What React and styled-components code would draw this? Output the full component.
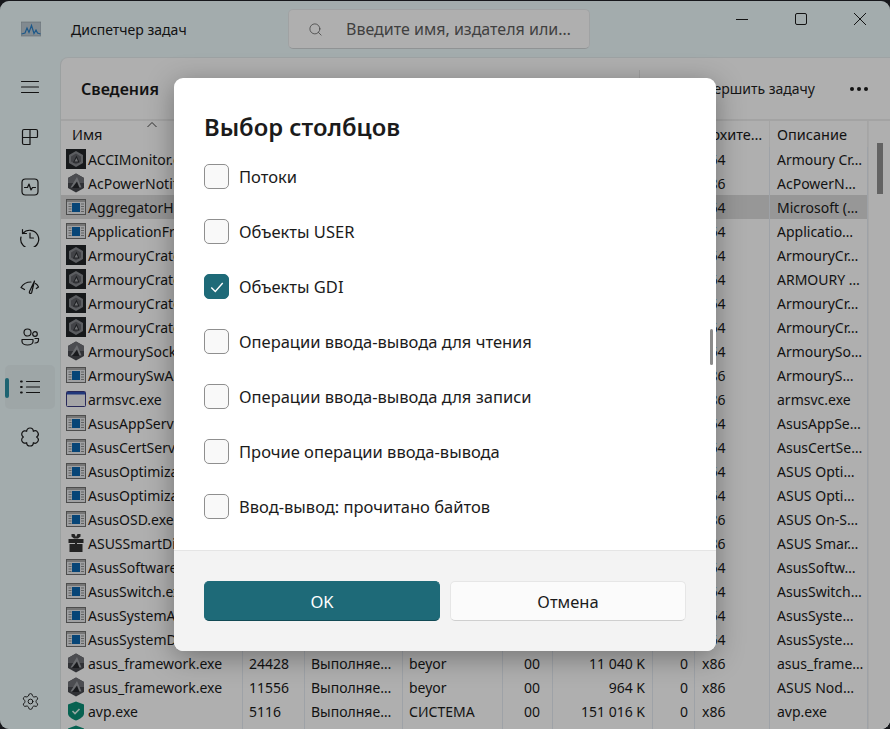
import React from 'react'
import styled, { createGlobalStyle } from 'styled-components'
import { Search, Settings } from 'lucide-react'

const GlobalStyle = createGlobalStyle`
  html, body {
    margin: 0;
    height: 100%;
    overflow: hidden;
    background: #17181c;
    font-family: "Noto Sans", "Liberation Sans", sans-serif;
  }
  #root { height: 100%; }
`

const Window = styled.div`
  position: relative;
  box-sizing: border-box;
  height: 728px;
  margin-top: 1px;
  border-radius: 9px;
  overflow: hidden;
  background: #eaf6f8;
  color: #1a1a1a;
  display: grid;
  grid-template-columns: 60px 1fr;
  grid-template-rows: 56px 1fr;
`

const TitleBar = styled.div`
  grid-column: 1 / 3;
  display: flex;
  align-items: center;
  padding-left: 21px;
`

const AppTitle = styled.span`
  font-size: 14px;
  margin-left: 30px;
  width: 217px;
`

const SearchBox = styled.div`
  box-sizing: border-box;
  width: 302px;
  height: 40px;
  display: flex;
  align-items: center;
  padding-left: 19px;
  background: #fbfbfb;
  border: 1px solid #e6e9ea;
  border-bottom-color: #cfd3d5;
  border-radius: 5px;
  color: #5c5c5c;
  font-size: 16px;
  white-space: nowrap;
  svg { margin-right: 23px; flex: none; }
`

const Controls = styled.div`
  margin-left: auto;
  align-self: flex-start;
  display: flex;
  align-items: center;
  gap: 47px;
  padding: 12px 24px 0 0;
  svg { display: block; }
`

const Sidebar = styled.nav`
  display: flex;
  flex-direction: column;
  align-items: center;
  gap: 6px;
  padding-top: 8px;
  padding-bottom: 6px;
`

const NavItem = styled.div`
  position: relative;
  width: 50px;
  height: 44px;
  display: flex;
  align-items: center;
  justify-content: center;
  border-radius: 5px;
  background: ${p => (p.$active ? '#e2eef0' : 'transparent')};
  margin-top: ${p => (p.$bottom ? 'auto' : '0')};
`

const ActiveMark = styled.span`
  position: absolute;
  left: 0;
  top: 13px;
  width: 4px;
  height: 20px;
  border-radius: 2px;
  background: #2a8fa3;
`

const Panel = styled.main`
  display: flex;
  flex-direction: column;
  background: #fbfbfb;
  border-top: 1px solid #e3eaeb;
  border-left: 1px solid #dfe5e6;
  border-top-left-radius: 8px;
  min-height: 0;
  min-width: 0;
`

const Toolbar = styled.div`
  height: 61px;
  flex: none;
  display: flex;
  align-items: center;
  border-bottom: 2px solid #eaeaea;
  padding-left: 20px;
`

const Heading = styled.h2`
  margin: 0;
  font-size: 16px;
  font-weight: 600;
`

const ToolDivider = styled.span`
  margin-left: auto;
  width: 1px;
  height: 38px;
  background: #e5e5e5;
`

const ToolButton = styled.span`
  margin-left: 50px;
  font-size: 14px;
  color: #1f1f1f;
  white-space: nowrap;
`

const More = styled.span`
  margin-left: 35px;
  margin-right: 22px;
  display: flex;
  gap: 3px;
  i {
    width: 4px;
    height: 4px;
    border-radius: 50%;
    background: #1a1a1a;
  }
`

const TableArea = styled.div`
  flex: 1;
  display: flex;
  min-height: 0;
`

const Table = styled.div`
  width: 807px;
  overflow: hidden;
`

const columns = '182px 62px 98px 100px 50px 100px 42px 75px 98px'

const HeaderRow = styled.div`
  display: grid;
  grid-template-columns: ${columns};
  height: 26px;
  font-size: 14.500px;
`

const HeaderCell = styled.div`
  position: relative;
  padding: 3px 5px 0 ${p => (p.$first ? 11 : 7)}px;
  white-space: nowrap;
  overflow: hidden;
  border-right: 1px solid #ececec;
  box-sizing: border-box;
`

const SortMark = styled.svg`
  position: absolute;
  left: 85px;
  top: 0;
`

const Row = styled.div`
  display: grid;
  grid-template-columns: ${columns};
  height: 24px;
  font-size: 14px;
  background: ${p => (p.$selected ? '#d9d9d9' : 'transparent')};
`

const Cell = styled.div`
  box-sizing: border-box;
  border-right: 1px solid #e3e9f0;
  padding: 1px ${p => p.$pr || 6}px 0 ${p => p.$pl || 6}px;
  line-height: 24px;
  text-align: ${p => (p.$right ? 'right' : 'left')};
  white-space: nowrap;
  overflow: hidden;
`

const NameCell = styled(Cell)`
  display: flex;
  align-items: flex-start;
  padding: 0 0 0 5px;
  line-height: 26px;
  gap: 2px;
  svg { flex: none; margin-top: 2px; }
`

const Track = styled.div`
  width: 22px;
  flex: none;
  border-left: 1px solid #efefef;
  box-sizing: border-box;
  padding: 22px 0 0 8px;
`

const Thumb = styled.div`
  width: 6px;
  height: 51px;
  background: #8e8e8e;
`

const Scrim = styled.div`
  position: absolute;
  inset: 0;
  background: rgba(0, 0, 0, 0.3);
  display: flex;
  align-items: center;
  justify-content: center;
  padding-bottom: 1px;
`

const Dialog = styled.div`
  position: relative;
  width: 542px;
  height: 573px;
  display: flex;
  flex-direction: column;
  background: #fff;
  border-radius: 9px;
  overflow: hidden;
  box-shadow: 0 6px 28px rgba(0, 0, 0, 0.34);
`

const DialogBody = styled.div`
  flex: 1;
  padding: 32px 30px 0;
`

const DialogTitle = styled.h1`
  margin: 0 0 4px;
  font-size: 23.800px;
  line-height: 35px;
  font-weight: 600;
  color: #1b1b1b;
`

const Option = styled.label`
  display: flex;
  align-items: center;
  gap: 10px;
  height: 55px;
  font-size: 16.500px;
  color: #1b1b1b;
`

const Box = styled.span`
  box-sizing: border-box;
  width: 25px;
  height: 25px;
  display: flex;
  align-items: center;
  justify-content: center;
  border-radius: 5px;
  background: ${p => (p.$checked ? '#1e6a78' : '#f9f9f9')};
  border: 1px solid ${p => (p.$checked ? '#1e6a78' : '#8f8f8f')};
`

const DialogScroll = styled.span`
  position: absolute;
  right: 3px;
  top: 251px;
  width: 3px;
  height: 36px;
  border-radius: 2px;
  background: #8b8b8b;
`

const Footer = styled.div`
  height: 101px;
  flex: none;
  box-sizing: border-box;
  background: #f3f3f3;
  border-top: 1px solid #e5e5e5;
  padding: 30px 30px 0;
  display: grid;
  grid-template-columns: 236px 236px;
  gap: 10px;
  align-items: start;
`

const Button = styled.button`
  height: 40px;
  padding: 0;
  font: inherit;
  font-size: 16.500px;
  border-radius: 5px;
  color: ${p => (p.$primary ? '#fff' : '#1b1b1b')};
  background: ${p => (p.$primary ? '#1e6a78' : '#fbfbfb')};
  border: 1px solid ${p => (p.$primary ? '#1e6a78' : '#e6e6e6')};
  border-bottom-color: ${p => (p.$primary ? '#124a55' : '#cfcfcf')};
`

const NavIcon = ({ children, size = 20 }) => (
  <svg width={size} height={size} viewBox="0 0 20 20" fill="none" stroke="#1c1c1c" strokeWidth="1.2" strokeLinecap="round" strokeLinejoin="round">
    {children}
  </svg>
)

const Armoury = () => (
  <svg width="20" height="20" viewBox="0 0 20 20">
    <rect width="20" height="20" fill="#222428" />
    <polygon points="10,2 17,6 17,14 10,18 3,14 3,6" fill="#85878c" />
    <polygon points="10,4.500 15,7.500 15,12.500 10,15.500 5,12.500 5,7.500" fill="#5f6166" />
    <polygon points="10.500,6.500 13.500,13.500 7,13.500" fill="#2c2e32" />
    <polygon points="10.500,9 12,12.500 8.500,12.500" fill="#a2a4a8" />
  </svg>
)

const Hex = () => (
  <svg width="20" height="20" viewBox="0 0 20 20">
    <polygon points="10,0.500 18,5 18,15 10,19.500 2,15 2,5" fill="#45474c" />
    <polygon points="10,0.500 18,5 18,10 2,10 2,5" fill="#6d6f74" />
    <polygon points="11,4 15.500,14.500 4.500,14.500" fill="#9a9ca1" />
    <polygon points="11,8.500 13.500,15 6,15" fill="#24262a" />
  </svg>
)

const Exe = () => (
  <svg width="20" height="20" viewBox="0 0 20 20">
    <rect x="0.500" y="2.500" width="19" height="15" fill="#e4e6e8" stroke="#6f6f6f" />
    <rect x="1" y="3" width="18" height="2" fill="#a9a9a9" />
    <path d="M2.500 7h3M2.500 9.500h3M2.500 12h3M2.500 14.500h3M15 7h3M15 9.500h3M15 12h3M15 14.500h3" stroke="#8d8d8d" />
    <rect x="6" y="6" width="8" height="9" fill="#0b63ab" />
  </svg>
)

const Win = () => (
  <svg width="20" height="20" viewBox="0 0 20 20">
    <rect x="0.500" y="2.500" width="19" height="15" rx="1" fill="#ececf0" stroke="#3a3a80" />
    <rect x="1" y="3" width="18" height="2.500" fill="#2f4fb0" />
  </svg>
)

const Gift = () => (
  <svg width="20" height="20" viewBox="0 0 20 20">
    <path d="M2.500 6h15v4h-15zM3.500 11h5.500v8H3.500zM11 11h5.500v8H11zM9 6h2v13H9z" fill="#333" />
    <path d="M5.500 1h3l1.500 3 1.500-3h3v2.500L12 5.500H8L5.500 3.500z" fill="#333" />
  </svg>
)

const Shield = () => (
  <svg width="20" height="20" viewBox="0 0 20 20">
    <path d="M10 0.500l8 3v9c0 3-4 5.500-8 7-4-1.500-8-4-8-7v-9z" fill="#0b8d74" />
    <path d="M6.500 10l2.500 2.500 4.500-4.500" fill="none" stroke="#d5efe8" strokeWidth="1.600" />
  </svg>
)

const ICONS = { armoury: Armoury, hex: Hex, exe: Exe, win: Win, gift: Gift, shield: Shield }

const rows = [
  ['armoury', 'ACCIMonitor.exe', 'x64', 'Armoury Cr…'],
  ['hex', 'AcPowerNotification.exe', 'x86', 'AcPowerN…'],
  ['exe', 'AggregatorHost.exe', 'x64', 'Microsoft (…'],
  ['exe', 'ApplicationFrameHost.exe', 'x64', 'Applicatio…'],
  ['armoury', 'ArmouryCrate.exe', 'x64', 'ArmouryCr…'],
  ['armoury', 'ArmouryCrate.exe', 'x64', 'ARMOURY …'],
  ['armoury', 'ArmouryCrate.exe', 'x64', 'ArmouryCr…'],
  ['armoury', 'ArmouryCrate.exe', 'x64', 'ArmouryCr…'],
  ['hex', 'ArmourySocketServer.exe', 'x64', 'ArmourySo…'],
  ['exe', 'ArmourySwAgent.exe', 'x86', 'ArmouryS…'],
  ['win', 'armsvc.exe', 'x86', 'armsvc.exe'],
  ['exe', 'AsusAppService.exe', 'x64', 'AsusAppSe…'],
  ['exe', 'AsusCertService.exe', 'x64', 'AsusCertSe…'],
  ['exe', 'AsusOptimization.exe', 'x64', 'ASUS Opti…'],
  ['exe', 'AsusOptimization.exe', 'x64', 'ASUS Opti…'],
  ['exe', 'AsusOSD.exe', 'x86', 'ASUS On-S…'],
  ['gift', 'ASUSSmartDisplay.exe', 'x86', 'ASUS Smar…'],
  ['exe', 'AsusSoftwareManager.exe', 'x64', 'AsusSoftw…'],
  ['exe', 'AsusSwitch.exe', 'x64', 'AsusSwitch…'],
  ['exe', 'AsusSystemAnalysis.exe', 'x64', 'AsusSyste…'],
  ['exe', 'AsusSystemDiagnosis.exe', 'x64', 'AsusSyste…'],
  ['hex', 'asus_framework.exe', 'x86', 'asus_frame…', '24428', 'Выполняе…', 'beyor', '00', '11 040 K', '0'],
  ['hex', 'asus_framework.exe', 'x86', 'ASUS Nod…', '11556', 'Выполняе…', 'beyor', '00', '964 K', '0'],
  ['shield', 'avp.exe', 'x86', 'avp.exe', '5116', 'Выполняе…', 'СИСТЕМА', '00', '151 016 K', '0'],
  ['shield', 'avpui.exe', 'x86', 'avpui.exe', '9120', 'Выполняе…', 'beyor', '00', '22 300 K', '0'],
]

const options = [
  ['Потоки', false],
  ['Объекты USER', false],
  ['Объекты GDI', true],
  ['Операции ввода-вывода для чтения', false],
  ['Операции ввода-вывода для записи', false],
  ['Прочие операции ввода-вывода', false],
  ['Ввод-вывод: прочитано байтов', false],
]

const headers = ['Имя', 'ИД п…', 'Состояние', 'Имя польз…', 'ЦП', 'Память (а…', 'UAC', 'Архите…', 'Описание']

const App = () => {
  return (
    <Window>
      <GlobalStyle />
      <TitleBar>
        <svg width="20" height="16" viewBox="0 0 20 16">
          <rect width="20" height="14" y="1" fill="#b9c6cf" stroke="#8b98a0" strokeWidth="0.600" />
          <path d="M0.500 13l3.500-1 2-5 2 4.500 2.500-7 2.500 8 2-3.500 1.500 3 3 1" fill="none" stroke="#2a7fc4" strokeWidth="1.200" />
        </svg>
        <AppTitle>Диспетчер задач</AppTitle>
        <SearchBox>
          <Search size={15} strokeWidth={1.2} color="#555" />
          Введите имя, издателя или…
        </SearchBox>
        <Controls>
          <svg width="12" height="12" viewBox="0 0 12 12"><path d="M0 6.500h12" stroke="#1c1c1c" strokeWidth="1" /></svg>
          <svg width="12" height="12" viewBox="0 0 12 12"><rect x="0.500" y="0.500" width="11" height="11" rx="1.500" fill="none" stroke="#1c1c1c" /></svg>
          <svg width="12" height="12" viewBox="0 0 12 12"><path d="M0 0l12 12M12 0L0 12" stroke="#1c1c1c" strokeWidth="1" /></svg>
        </Controls>
      </TitleBar>

      <Sidebar>
        <NavItem>
          <NavIcon><path d="M1.500 4.500h17M1.500 10h17M1.500 15.500h17" /></NavIcon>
        </NavItem>
        <NavItem>
          <NavIcon><path d="M4 2.500h6v15H4a1.500 1.500 0 0 1-1.500-1.500V4A1.500 1.500 0 0 1 4 2.500zM10 2.500h6A1.500 1.500 0 0 1 17.500 4v5.500a1 1 0 0 1-1 1H2.500" /></NavIcon>
        </NavItem>
        <NavItem>
          <NavIcon>
            <rect x="2" y="2" width="16" height="16" rx="3.500" />
            <path d="M4.500 10.500h3l1.500-3.500 2 6 1.500-2.500h3" />
          </NavIcon>
        </NavItem>
        <NavItem>
          <NavIcon>
            <path d="M2.800 6.500A9 9 0 1 1 1 10M2.500 2.500v4h4" />
            <path d="M10 6v5h3.500" />
          </NavIcon>
        </NavItem>
        <NavItem>
          <NavIcon>
            <path d="M4.500 12.500L1 10.500C3 7 6.500 5 11 5" />
            <path d="M14.500 4L9.500 14.500c-.8 2 1.500 2.800 2.200 1L14.500 4z" />
            <path d="M15.500 6.500c1.300.8 2.300 2 3 3.500l-2.200 1.500" />
          </NavIcon>
        </NavItem>
        <NavItem>
          <NavIcon>
            <circle cx="7.500" cy="5.500" r="3.500" />
            <circle cx="15" cy="7" r="2.300" />
            <path d="M2 12.500h11v2c0 2-2.500 3.500-5.500 3.500S2 16.500 2 14.500zM15 11.500h3.500v1.500c0 1.800-1.500 3-3.500 3" />
          </NavIcon>
        </NavItem>
        <NavItem $active>
          <ActiveMark />
          <NavIcon>
            <path d="M6.500 4.500h13M6.500 10h13M6.500 15.500h13" />
            <path d="M1 4.500h.8M1 10h.8M1 15.500h.8" strokeWidth="2" />
          </NavIcon>
        </NavItem>
        <NavItem>
          <NavIcon>
            <path d="M6.700 4.280A3.300 3.300 0 0 1 13.300 4.280A3.300 3.300 0 0 1 16.600 10A3.300 3.300 0 0 1 13.300 15.720A3.300 3.300 0 0 1 6.700 15.720A3.300 3.300 0 0 1 3.400 10A3.300 3.300 0 0 1 6.700 4.280z" />
          </NavIcon>
        </NavItem>
        <NavItem $bottom>
          <Settings size={19} strokeWidth={1.2} color="#1c1c1c" />
        </NavItem>
      </Sidebar>

      <Panel>
        <Toolbar>
          <Heading>Сведения</Heading>
          <ToolDivider />
          <ToolButton>Завершить задачу</ToolButton>
          <More><i /><i /><i /></More>
        </Toolbar>
        <TableArea>
          <Table>
            <HeaderRow>
              {headers.map((h, i) => (
                <HeaderCell key={i} $first={i === 0}>
                  {h}
                  {i === 0 && (
                    <SortMark width="12" height="8" viewBox="0 0 12 8">
                      <path d="M1.500 6L6 1.500 10.500 6" fill="none" stroke="#444" />
                    </SortMark>
                  )}
                </HeaderCell>
              ))}
            </HeaderRow>
            {rows.map((r, i) => {
              const Icon = ICONS[r[0]]
              return (
                <Row key={i} $selected={i === 2}>
                  <NameCell><Icon />{r[1]}</NameCell>
                  <Cell>{r[4]}</Cell>
                  <Cell>{r[5]}</Cell>
                  <Cell>{r[6]}</Cell>
                  <Cell $right $pr={12}>{r[7]}</Cell>
                  <Cell $right $pr={7}>{r[8]}</Cell>
                  <Cell $right $pr={6}>{r[9]}</Cell>
                  <Cell $pl={7}>{r[2]}</Cell>
                  <Cell $pl={7}>{r[3]}</Cell>
                </Row>
              )
            })}
          </Table>
          <Track><Thumb /></Track>
        </TableArea>
      </Panel>

      <Scrim>
        <Dialog>
          <DialogBody>
            <DialogTitle>Выбор столбцов</DialogTitle>
            {options.map(([label, checked]) => (
              <Option key={label}>
                <Box $checked={checked}>
                  {checked && (
                    <svg width="16" height="16" viewBox="0 0 14 14">
                      <path d="M2 7.500l3.500 3.500L12 3.500" fill="none" stroke="#fff" strokeWidth="1.200" />
                    </svg>
                  )}
                </Box>
                {label}
              </Option>
            ))}
          </DialogBody>
          <DialogScroll />
          <Footer>
            <Button $primary>OK</Button>
            <Button>Отмена</Button>
          </Footer>
        </Dialog>
      </Scrim>
    </Window>
  )
}

export default App
